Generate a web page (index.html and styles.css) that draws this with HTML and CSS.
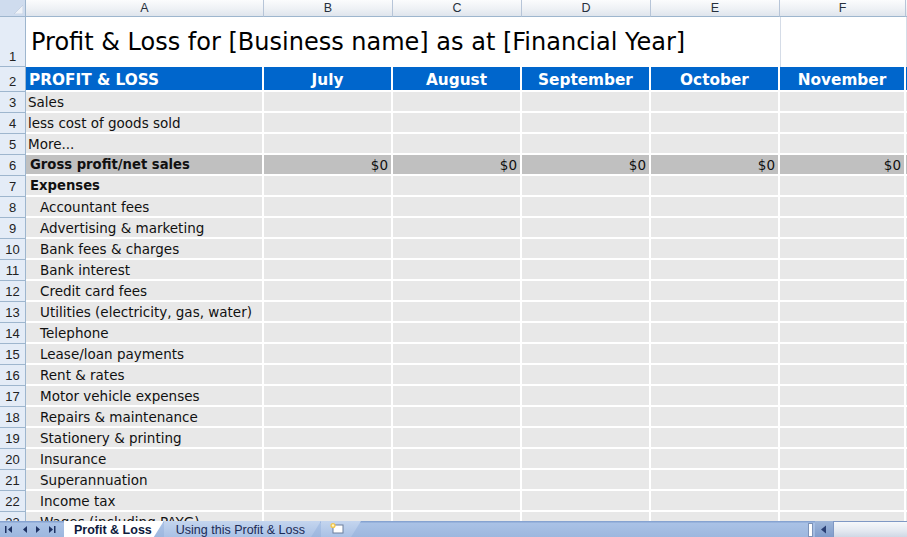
FILE: index.html
```html
<!DOCTYPE html>
<html lang="en">
<head>
  <meta charset="UTF-8" />
  <title>Profit &amp; Loss</title>
  <link rel="stylesheet" href="styles.css">
</head>
<body>
  <div class="window">
    <div class="sheet-area">
      <table class="sheet">
        <colgroup>
          <col class="col-rh"><col class="col-a"><col class="col-m"><col class="col-m"><col class="col-m"><col class="col-m"><col class="col-f"><col class="col-m">
        </colgroup>
        <tr class="col-heads">
          <th class="corner">
            <svg width="10" height="10" viewBox="0 0 10 10"><polygon points="10,1 10,10 1,10" fill="#eef2f8" stroke="#b9c8db" stroke-width="0.6"/></svg>
          </th>
          <th>A</th><th>B</th><th>C</th><th>D</th><th>E</th><th>F</th><th></th>
        </tr>
        <tr class="row-title">
          <td class="rh">1</td>
          <td class="title" colspan="5">Profit &amp; Loss for [Business name] as at [Financial Year]</td>
          <td class="blank"></td><td class="blank"></td>
        </tr>
        <tr class="row-head">
          <td class="rh">2</td>
          <td class="c head left">PROFIT &amp; LOSS</td>
          <td class="c head">July</td><td class="c head">August</td><td class="c head">September</td><td class="c head">October</td><td class="c head">November</td><td class="c head"></td>
        </tr>
        <tr class="r"><td class="rh">3</td><td class="c label">Sales</td><td class="c"></td><td class="c"></td><td class="c"></td><td class="c"></td><td class="c"></td><td class="c"></td></tr>
        <tr class="r"><td class="rh">4</td><td class="c label">less cost of goods sold</td><td class="c"></td><td class="c"></td><td class="c"></td><td class="c"></td><td class="c"></td><td class="c"></td></tr>
        <tr class="r"><td class="rh">5</td><td class="c label">More...</td><td class="c"></td><td class="c"></td><td class="c"></td><td class="c"></td><td class="c"></td><td class="c"></td></tr>
        <tr class="r total"><td class="rh">6</td><td class="c label bold">Gross profit/net sales</td><td class="c num">$0</td><td class="c num">$0</td><td class="c num">$0</td><td class="c num">$0</td><td class="c num">$0</td><td class="c"></td></tr>
        <tr class="r"><td class="rh">7</td><td class="c label bold">Expenses</td><td class="c"></td><td class="c"></td><td class="c"></td><td class="c"></td><td class="c"></td><td class="c"></td></tr>
        <tr class="r"><td class="rh">8</td><td class="c label indent">Accountant fees</td><td class="c"></td><td class="c"></td><td class="c"></td><td class="c"></td><td class="c"></td><td class="c"></td></tr>
        <tr class="r"><td class="rh">9</td><td class="c label indent">Advertising &amp; marketing</td><td class="c"></td><td class="c"></td><td class="c"></td><td class="c"></td><td class="c"></td><td class="c"></td></tr>
        <tr class="r"><td class="rh">10</td><td class="c label indent">Bank fees &amp; charges</td><td class="c"></td><td class="c"></td><td class="c"></td><td class="c"></td><td class="c"></td><td class="c"></td></tr>
        <tr class="r"><td class="rh">11</td><td class="c label indent">Bank interest</td><td class="c"></td><td class="c"></td><td class="c"></td><td class="c"></td><td class="c"></td><td class="c"></td></tr>
        <tr class="r"><td class="rh">12</td><td class="c label indent">Credit card fees</td><td class="c"></td><td class="c"></td><td class="c"></td><td class="c"></td><td class="c"></td><td class="c"></td></tr>
        <tr class="r"><td class="rh">13</td><td class="c label indent">Utilities (electricity, gas, water)</td><td class="c"></td><td class="c"></td><td class="c"></td><td class="c"></td><td class="c"></td><td class="c"></td></tr>
        <tr class="r"><td class="rh">14</td><td class="c label indent">Telephone</td><td class="c"></td><td class="c"></td><td class="c"></td><td class="c"></td><td class="c"></td><td class="c"></td></tr>
        <tr class="r"><td class="rh">15</td><td class="c label indent">Lease/loan payments</td><td class="c"></td><td class="c"></td><td class="c"></td><td class="c"></td><td class="c"></td><td class="c"></td></tr>
        <tr class="r"><td class="rh">16</td><td class="c label indent">Rent &amp; rates</td><td class="c"></td><td class="c"></td><td class="c"></td><td class="c"></td><td class="c"></td><td class="c"></td></tr>
        <tr class="r"><td class="rh">17</td><td class="c label indent">Motor vehicle expenses</td><td class="c"></td><td class="c"></td><td class="c"></td><td class="c"></td><td class="c"></td><td class="c"></td></tr>
        <tr class="r"><td class="rh">18</td><td class="c label indent">Repairs &amp; maintenance</td><td class="c"></td><td class="c"></td><td class="c"></td><td class="c"></td><td class="c"></td><td class="c"></td></tr>
        <tr class="r"><td class="rh">19</td><td class="c label indent">Stationery &amp; printing</td><td class="c"></td><td class="c"></td><td class="c"></td><td class="c"></td><td class="c"></td><td class="c"></td></tr>
        <tr class="r"><td class="rh">20</td><td class="c label indent">Insurance</td><td class="c"></td><td class="c"></td><td class="c"></td><td class="c"></td><td class="c"></td><td class="c"></td></tr>
        <tr class="r"><td class="rh">21</td><td class="c label indent">Superannuation</td><td class="c"></td><td class="c"></td><td class="c"></td><td class="c"></td><td class="c"></td><td class="c"></td></tr>
        <tr class="r"><td class="rh">22</td><td class="c label indent">Income tax</td><td class="c"></td><td class="c"></td><td class="c"></td><td class="c"></td><td class="c"></td><td class="c"></td></tr>
        <tr class="r"><td class="rh">23</td><td class="c label indent">Wages (including PAYG)</td><td class="c"></td><td class="c"></td><td class="c"></td><td class="c"></td><td class="c"></td><td class="c"></td></tr>
      </table>
    </div>

    <!-- sheet tabs + horizontal scrollbar -->
    <div class="tabbar">
      <div class="tab-nav">
        <svg width="60" height="15" viewBox="0 0 60 15">
          <g fill="#1f3263">
            <rect x="5" y="4" width="1.5" height="7"/><polygon points="12,4 12,11 8,7.5"/>
            <polygon points="27,4 27,11 23,7.5"/>
            <polygon points="36,4 36,11 40,7.5"/>
            <polygon points="49,4 49,11 53,7.5"/><rect x="54" y="4" width="1.5" height="7"/>
          </g>
        </svg>
      </div>
      <div class="tab active">Profit &amp; Loss</div>
      <div class="tab">Using this Profit &amp; Loss</div>
      <div class="tab insert">
        <svg width="16" height="13" viewBox="0 0 16 13">
          <rect x="4" y="3" width="10" height="8" fill="#fff" stroke="#6d7f9c" stroke-width="1"/>
          <circle cx="4" cy="3.5" r="2.6" fill="#f3c64a"/>
          <circle cx="4" cy="3.5" r="1.2" fill="#fff6c8"/>
        </svg>
      </div>
      <div class="tab-fill"></div>
      <div class="hscroll">
        <div class="split"></div>
        <div class="arrow-btn">
          <svg width="8" height="9" viewBox="0 0 8 9"><polygon points="6,0.5 6,8.5 1,4.5" fill="#2a3f73"/></svg>
        </div>
        <div class="track"></div>
      </div>
    </div>
  </div>
</body>
</html>
```

FILE: styles.css
```css
:root {
  --cell: #e8e8e8;
  --head-blue: #0066cc;
  --total: #c0c0c0;
  --grid-line: #9eb6ce;
  --rh-bg: #e4ecf7;
  --font: "DejaVu Sans", Verdana, sans-serif;
  --ui-font: "Liberation Sans", Arial, sans-serif;
}

body {
  margin: 0;
  background-color: #fff;
  font-family: var(--font);
  color: #111;
}

.window {
  width: 907px;
  height: 537px;
  display: flex;
  flex-direction: column;
  overflow: hidden;
}

.sheet-area {
  flex: 1;
  overflow: hidden;
}

.sheet {
  border-collapse: separate;
  border-spacing: 0;
  table-layout: fixed;
  width: 1035px;
}

.col-rh { width: 26px; }
.col-a { width: 238px; }
.col-m { width: 129px; }
.col-f { width: 126px; }

.sheet th,
.sheet td {
  padding: 0;
  box-sizing: border-box;
  overflow: hidden;
  white-space: nowrap;
}

/* column letters */
.col-heads { height: 17px; }

.col-heads th {
  font-family: var(--ui-font);
  font-size: 12.5px;
  font-weight: normal;
  color: #27303d;
  line-height: 15px;
  background: linear-gradient(to bottom, #fbfcfd 0%, #eef1f5 55%, #dfe5ed 100%);
  border-right: 1px solid #b7c5d8;
  border-bottom: 1px solid var(--grid-line);
}

.col-heads th.corner {
  background: #cfdcee;
  border-right: 1px solid var(--grid-line);
  text-align: right;
  vertical-align: bottom;
  line-height: 0;
  padding: 0 2px 2px 0;
}

/* row numbers */
.rh {
  font-family: var(--ui-font);
  font-size: 13px;
  color: #222;
  text-align: center;
  vertical-align: bottom;
  line-height: 19px;
  background-color: var(--rh-bg);
  border-right: 1px solid var(--grid-line);
  border-bottom: 1px solid var(--grid-line);
}

.row-title { height: 50px; }
.row-head { height: 25px; }
.r { height: 21px; }

.sheet .title {
  font-size: 24px;
  color: #000;
  vertical-align: bottom;
  padding: 0 0 11px 5px;
  line-height: 28px;
}

.blank {
  border-left: 1px solid #d5dce7;
}

.c {
  background-color: var(--cell);
  border-right: 2px solid #fff;
  border-bottom: 2px solid #fff;
  font-size: 13.5px;
  line-height: 18px;
  vertical-align: top;
}

.sheet .c {
  padding-top: 1px;
}

.sheet .head {
  background-color: var(--head-blue);
  color: #fff;
  font-weight: bold;
  font-size: 15.3px;
  text-align: center;
  line-height: 19px;
  padding-top: 4px;
}

.sheet .head.left {
  text-align: left;
  padding-left: 3px;
}

.sheet .label { padding-left: 2px; }
.sheet .indent { padding-left: 14px; }
.sheet .bold {
  font-weight: bold;
  font-size: 13.2px;
  padding-left: 4px;
}

.total .c { background-color: var(--total); }

.sheet .num {
  text-align: right;
  padding-right: 3px;
}

/* bottom bar */
.tabbar {
  height: 16px;
  display: flex;
  align-items: stretch;
  background: linear-gradient(to bottom, #86a3d1 0, #86a3d1 1px, #aac2e6 2px, #9db7de 100%);
  font-family: var(--ui-font);
  font-size: 12.5px;
  flex-shrink: 0;
}

.tab-nav {
  width: 62px;
  display: flex;
  align-items: center;
}

.tab {
  padding: 2px 16px 0 12px;
  color: #1b2a55;
  line-height: 14px;
  clip-path: polygon(0 0, 100% 0, calc(100% - 10px) 100%, 0 100%);
  background: linear-gradient(to bottom, #c4d5ee, #a9c1e5);
}

.tab.active {
  background: #fff;
  font-weight: bold;
  color: #0e1a3c;
  padding-left: 10px;
  padding-right: 12px;
  margin-left: 2px;
}

.tab.insert {
  width: 40px;
  padding: 1px 0 0 8px;
  box-sizing: border-box;
}

.tab-fill { flex: 1; }

.hscroll {
  width: 99px;
  display: flex;
}

.split {
  width: 5px;
  background: #fff;
  border: 1px solid #7d93b8;
  box-sizing: border-box;
  margin: 2px 2px 0 0;
}

.arrow-btn {
  width: 18px;
  display: flex;
  align-items: center;
  justify-content: center;
  background: linear-gradient(to bottom, #9fb6d9, #7f9ccb);
}

.track {
  flex: 1;
  background: linear-gradient(to bottom, #f6f8fb, #e3e8f0 60%, #cfd8e5);
  border-top: 1px solid #7f98c4;
  border-left: 1px solid #7f98c4;
}
```
